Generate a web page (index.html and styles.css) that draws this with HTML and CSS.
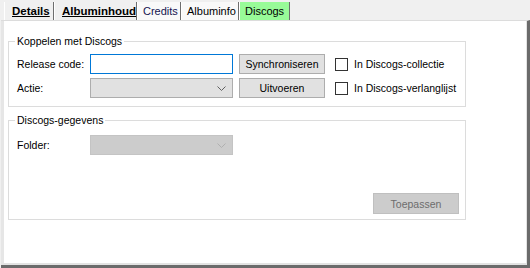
FILE: index.html
```html
<!DOCTYPE html>
<html>
    <head>
        <meta charset="UTF-8">
        <title>Discogs</title>
        <link rel="stylesheet" href="styles.css">
    </head>
    <body>
        <div class="tabs">
            <div class="tab tab-bold">Details</div>
            <div class="tab tab-bold">Albuminhoud</div>
            <div class="tab tab-light tab-credits">Credits</div>
            <div class="tab tab-light">Albuminfo</div>
            <div class="tab tab-active">Discogs</div>
        </div>
        <div class="panel">
            <div class="panel-inner">
                <fieldset class="group group-koppelen">
                    <legend>Koppelen met Discogs</legend>
                    <div class="rows">
                        <label class="lbl">Release code:</label>
                        <input class="textbox" type="text">
                        <button class="btn">Synchroniseren</button>
                        <label class="check"><span class="box"></span>In Discogs-collectie</label>

                        <label class="lbl">Actie:</label>
                        <div class="combo">
                            <svg width="9" height="5" viewBox="0 0 9 5"><polyline points="0.5,0.5 4.5,4.5 8.5,0.5" fill="none" stroke="#606060" stroke-width="1"/></svg>
                        </div>
                        <button class="btn">Uitvoeren</button>
                        <label class="check"><span class="box"></span>In Discogs-verlanglijst</label>
                    </div>
                </fieldset>

                <fieldset class="group group-gegevens">
                    <legend>Discogs-gegevens</legend>
                    <div class="folder-row">
                        <label class="lbl">Folder:</label>
                        <div class="combo combo-disabled">
                            <svg width="9" height="5" viewBox="0 0 9 5"><polyline points="0.5,0.5 4.5,4.5 8.5,0.5" fill="none" stroke="#b0b0b0" stroke-width="1"/></svg>
                        </div>
                    </div>
                    <div class="apply-row">
                        <button class="btn btn-disabled">Toepassen</button>
                    </div>
                </fieldset>
            </div>
        </div>
    </body>
</html>
```

FILE: styles.css
```css
body{
    margin : 0;
    background-color : #f0f0f0;
    font-family : "Liberation Sans", Arial, sans-serif;
    font-size : 10.5px;
    color : #000000;
    width : 530px;
    height : 268px;
    overflow : hidden;
}

.tabs{
    display : flex;
    height : 18px;
    padding-top : 2px;
    padding-left : 4px;
}

.tab{
    height : 18px;
    line-height : 18px;
    font-size : 11px;
    padding : 0 3px 0 7px;
    border-left : 1px solid #ffffff;
    border-right : 1px solid #6e6e6e;
    box-sizing : border-box;
}

.tab-bold{
    font-weight : bold;
    font-size : 11.5px;
    text-decoration : underline;
    background-color : #f0f0f0;
}

.tab-bold:first-child{
    width : 50px;
}

.tab-bold:nth-child(2){
    width : 83px;
}

.tab-light{
    background-color : #f9f9f9;
    padding-left : 5px;
}

.tab-credits{
    width : 44px;
    color : #141450;
}

.tab-light:nth-child(4){
    width : 58px;
}

.tab-active{
    width : 51px;
    background-color : #98fb98;
    padding-left : 5px;
}

.panel{
    height : 248px;
    margin-left : 1px;
    border-top : 1px solid #dcdcdc;
    border-right : 3px solid #6b6b6b;
    border-bottom : 3px solid #6b6b6b;
    box-sizing : border-box;
}

.panel-inner{
    height : 100%;
    background-color : #ffffff;
    border-left : 3px solid #e6e6e6;
    border-right : 1px solid #e3e3e3;
    border-bottom : 2px solid #e3e3e3;
    box-sizing : border-box;
    padding : 14px 0 0 4px;
}

.group{
    width : 458px;
    margin : 0;
    padding : 0;
    border : 1px solid #dcdcdc;
    box-sizing : border-box;
}

.group legend{
    margin-left : 6px;
    padding : 0 2px 0 2px;
    line-height : 12px;
}

.rows{
    display : grid;
    grid-template-columns : 73px 143px 92px auto;
    row-gap : 4px;
    padding : 7px 0 8px 8px;
    align-items : center;
}

.lbl{
    line-height : 20px;
    white-space : nowrap;
}

.textbox{
    width : 143px;
    height : 20px;
    margin : 0;
    border : 1px solid #0078d7;
    box-sizing : border-box;
    background-color : #ffffff;
    outline : none;
}

.combo{
    width : 143px;
    height : 20px;
    border : 1px solid #adadad;
    background-color : #e1e1e1;
    box-sizing : border-box;
    display : flex;
    align-items : center;
    justify-content : flex-end;
    padding-right : 6px;
}

.combo-disabled{
    background-color : #cccccc;
    border-color : #c4c4c4;
}

.btn{
    width : 86px;
    height : 20px;
    margin : 0;
    padding : 0;
    border : 1px solid #adadad;
    background-color : #e1e1e1;
    font-family : inherit;
    font-size : 10.5px;
    color : #000000;
}

.rows .btn{
    margin-left : 6px;
}

.btn-disabled{
    height : 21px;
    background-color : #cccccc;
    border-color : #bfbfbf;
    color : #6d6d6d;
}

.check{
    display : flex;
    align-items : center;
    margin-left : 10px;
    white-space : nowrap;
}

.box{
    width : 13px;
    height : 13px;
    border : 1px solid #333333;
    background-color : #ffffff;
    box-sizing : border-box;
    margin-right : 6px;
}

.group-gegevens{
    margin-top : 7px;
    height : 106px;
}

.folder-row{
    display : flex;
    align-items : center;
    padding : 9px 0 0 8px;
}

.folder-row .lbl{
    width : 73px;
}

.apply-row{
    display : flex;
    justify-content : flex-end;
    padding : 38px 6px 0 0;
}
```
